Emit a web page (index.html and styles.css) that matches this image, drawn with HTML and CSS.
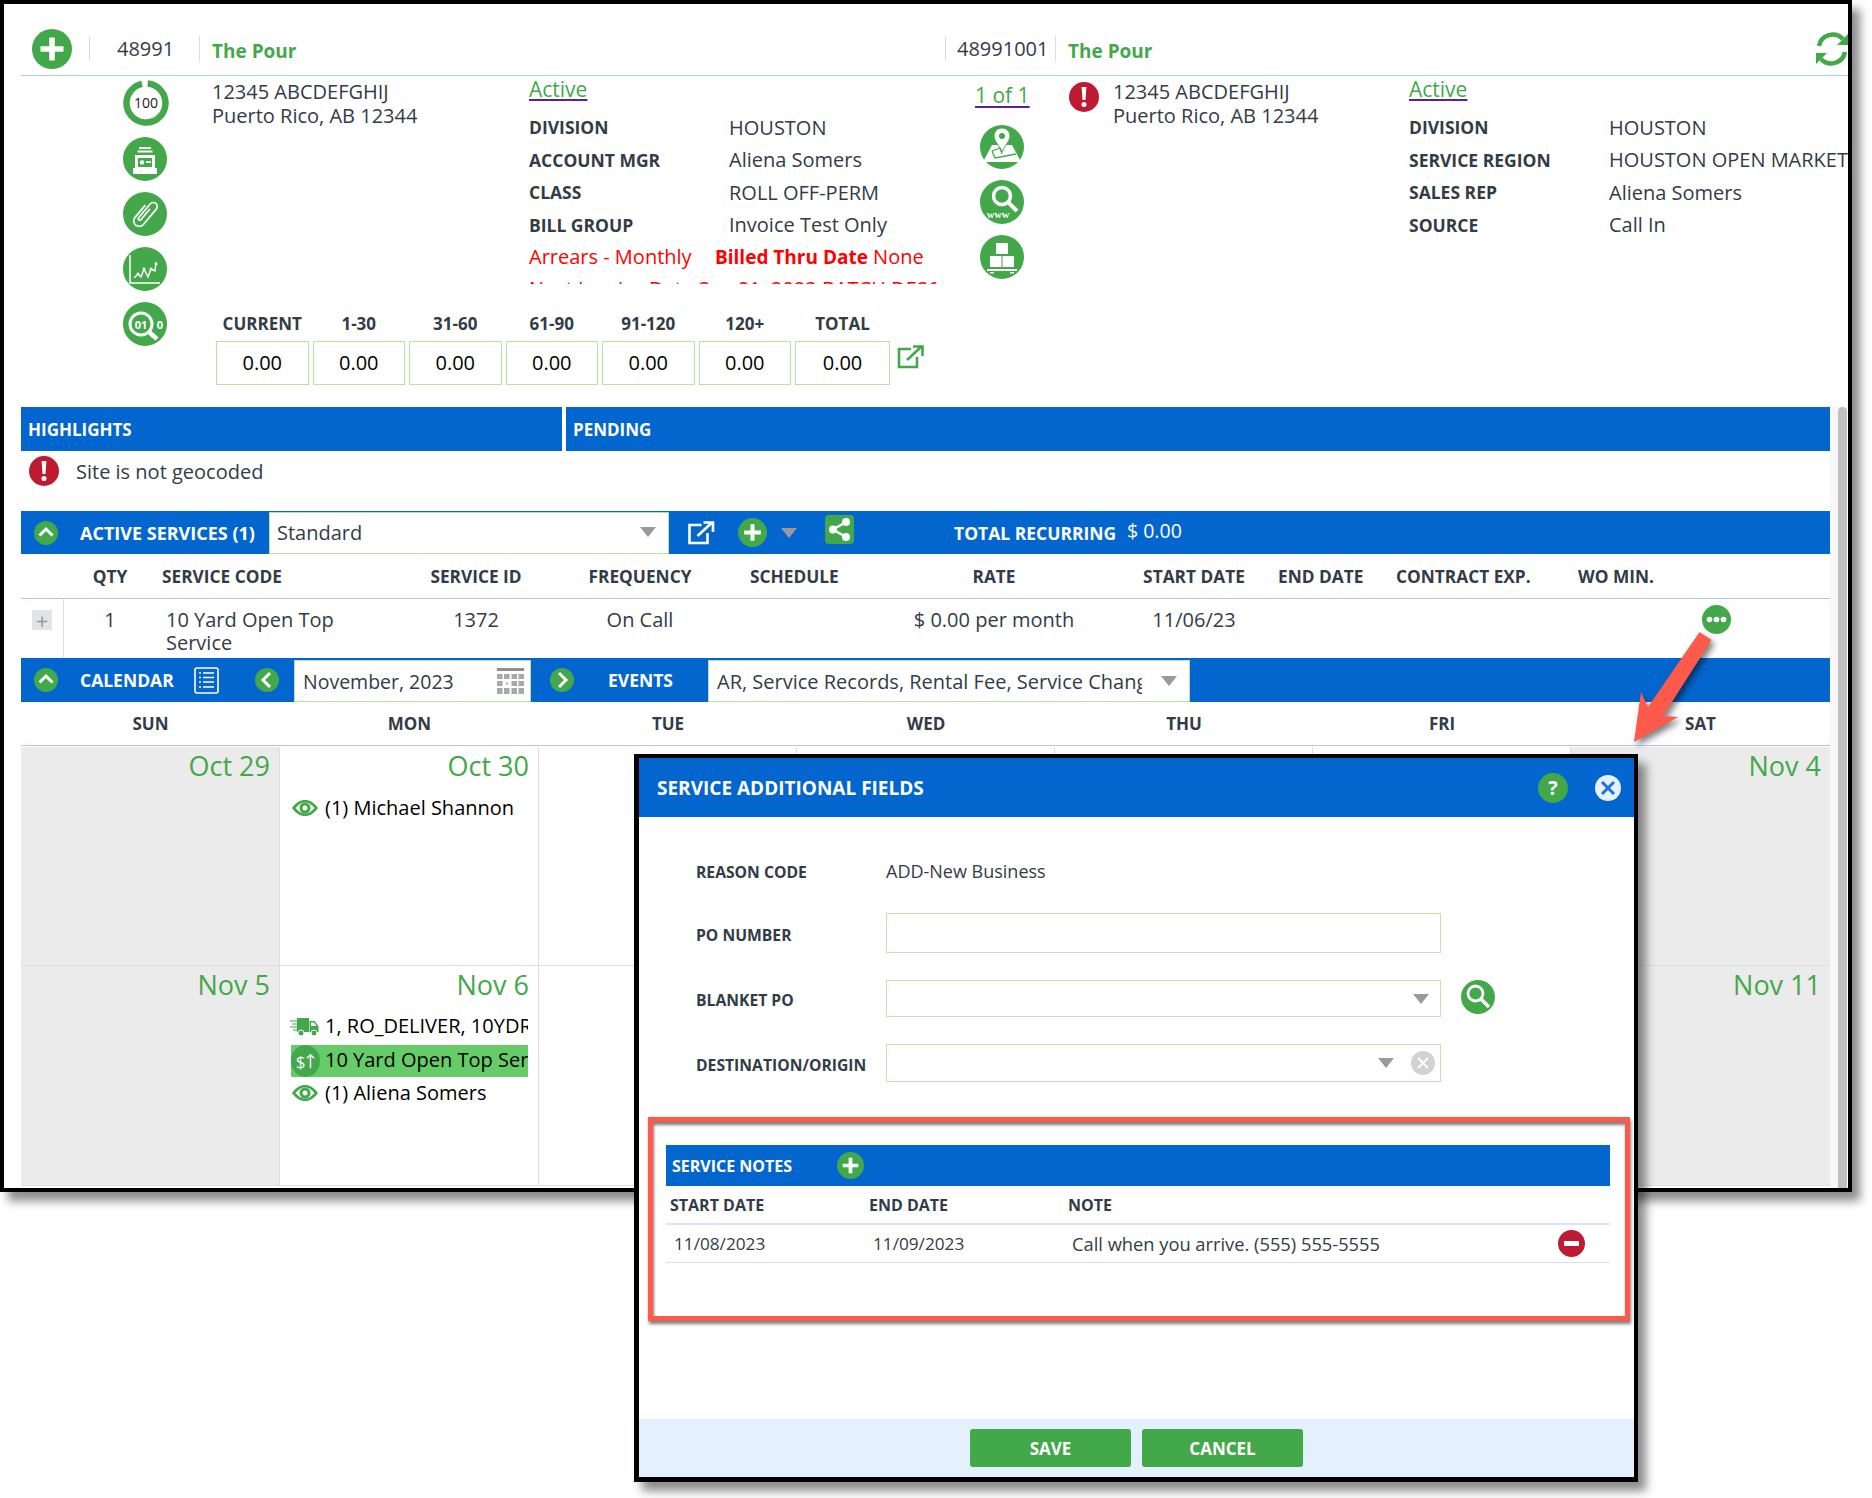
FILE: index.html
```html
<!DOCTYPE html>
<html lang="en">
<head>
<meta charset="utf-8">
<title>Service Additional Fields</title>
<link rel="stylesheet" href="styles.css">
</head>
<body>
<svg class="defs" width="0" height="0" aria-hidden="true">
  <symbol id="plus" viewBox="0 0 40 40"><circle cx="20" cy="20" r="20" fill="#43a84a"/><path d="M20 8.500v23M8.500 20h23" stroke="#fff" stroke-width="5.500"/></symbol>
  <symbol id="up" viewBox="0 0 24 24"><circle cx="12" cy="12" r="12" fill="#43a84a"/><path d="M5.500 14.500 12 8l6.500 6.500" fill="none" stroke="#fff" stroke-width="3"/></symbol>
  <symbol id="left" viewBox="0 0 24 24"><circle cx="12" cy="12" r="12" fill="#43a84a"/><path d="M15 5 8 12l7 7" fill="none" stroke="#fff" stroke-width="3"/></symbol>
  <symbol id="right" viewBox="0 0 24 24"><circle cx="12" cy="12" r="12" fill="#43a84a"/><path d="m9 5 7 7-7 7" fill="none" stroke="#fff" stroke-width="3"/></symbol>
  <symbol id="alert" viewBox="0 0 30 30"><circle cx="15" cy="15" r="15" fill="#be1b31"/><path d="M12.600 5h4.800l-.9 13h-3z" fill="#fff"/><circle cx="15" cy="22.500" r="2.500" fill="#fff"/></symbol>
  <symbol id="ext" viewBox="0 0 28 24"><path d="M14 4H2v18h18V12" fill="none" stroke="currentColor" stroke-width="2.600"/><path d="M10 15 24 2M16 1.500h9.500V11" fill="none" stroke="currentColor" stroke-width="2.600"/></symbol>
  <symbol id="caret" viewBox="0 0 16 10"><path d="M0 0h16l-8 10z" fill="#9a9a9a"/></symbol>
  <symbol id="eye" viewBox="0 0 28 18"><path d="M1 9c4-5.500 8-8 13-8s9 2.500 13 8c-4 5.500-8 8-13 8S5 14.500 1 9z" fill="#43a84a"/><path d="M4.500 9C8 5 10.500 3.500 14 3.500S20 5 23.500 9C20 13 17.500 14.500 14 14.500S8 13 4.500 9z" fill="#fff"/><circle cx="14" cy="9" r="5.500" fill="#43a84a"/><circle cx="14" cy="9" r="2.500" fill="#fff"/></symbol>
  <symbol id="lens" viewBox="0 0 34 34"><circle cx="17" cy="17" r="17" fill="#43a84a"/><circle cx="14.500" cy="13.500" r="7.500" fill="#43a84a" stroke="#fff" stroke-width="2.800"/><path d="m20 19 8 8" stroke="#fff" stroke-width="3.500"/></symbol>
</svg>

<div class="window">
  <header class="topbar">
    <div class="topbar-left">
      <svg class="ic-40"><use href="#plus"/></svg>
      <span class="id-cell id-account">48991</span>
      <span class="name-cell">The Pour</span>
    </div>
    <div class="topbar-right">
      <span class="id-cell id-site">48991001</span>
      <span class="name-cell">The Pour</span>
      <svg class="refresh" viewBox="0 0 36 36"><path d="M5 15A14 14 0 0 1 29 8M31 21A14 14 0 0 1 7 28" fill="none" stroke="#43a84a" stroke-width="4.500"/><path d="M34 3v11H23zM2 33V22h11z" fill="#43a84a"/></svg>
    </div>
  </header>

  <section class="info">
    <nav class="rail">
      <svg class="rail-ring" viewBox="0 0 46 46"><circle cx="23" cy="23" r="19.500" fill="#fff" stroke="#43a84a" stroke-width="6.500" stroke-dasharray="116 6.500" transform="rotate(-85 23 23)"/><text x="23" y="28" class="ring-text">100</text></svg>
      <svg class="rail-ic" viewBox="0 0 44 44"><circle cx="22" cy="22" r="22" fill="#43a84a"/><path d="M16 11h12M14.500 14.500h15" stroke="#fff" stroke-width="2"/><path d="M12 18h20v14H12z" fill="#fff"/><path d="M15 21h14v9H15z" fill="#43a84a"/><circle cx="19" cy="25.500" r="2.300" fill="#fff"/><path d="M23 24h5v2h-5z" fill="#fff"/><path d="M10 31h24v6H10z" fill="#fff"/></svg>
      <svg class="rail-ic" viewBox="0 0 44 44"><circle cx="22" cy="22" r="22" fill="#43a84a"/><path d="M16.500 15v16a5.500 5.500 0 0 0 11 0V11a4 4 0 0 0-8 0v18a1.500 1.500 0 0 0 3 0V15" fill="none" stroke="#fff" stroke-width="1.700" transform="rotate(40 22 22)"/></svg>
      <svg class="rail-ic" viewBox="0 0 44 44"><circle cx="22" cy="22" r="22" fill="#43a84a"/><path d="M7 8v28h30" fill="none" stroke="#fff" stroke-width="1.500"/><path d="m11 31 4-4 3 3 3-8 4 8 3-8 4 2 1-9" fill="none" stroke="#fff" stroke-width="1.400"/><circle cx="21" cy="22" r="1.500" fill="#fff"/><circle cx="28" cy="22" r="1.500" fill="#fff"/><circle cx="33" cy="17" r="1.500" fill="#fff"/><circle cx="15" cy="27" r="1.500" fill="#fff"/></svg>
      <svg class="rail-ic" viewBox="0 0 44 44"><circle cx="22" cy="22" r="22" fill="#43a84a"/><circle cx="18" cy="22" r="11" fill="none" stroke="#fff" stroke-width="3"/><path d="m26 30 8 7" stroke="#fff" stroke-width="4.500"/><text x="18" y="26.500" class="bin-text">01</text><text x="37" y="26.500" class="bin-text">0</text></svg>
    </nav>
    <div class="info-main">
      <div class="info-top">
        <div class="address address-account">12345 ABCDEFGHIJ<br>Puerto Rico, AB 12344</div>
        <div class="details details-account">
          <a class="status" href="#">Active</a>
          <dl class="fields">
            <dt>DIVISION</dt><dd>HOUSTON</dd>
            <dt>ACCOUNT MGR</dt><dd>Aliena Somers</dd>
            <dt>CLASS</dt><dd>ROLL OFF-PERM</dd>
            <dt>BILL GROUP</dt><dd>Invoice Test Only</dd>
          </dl>
          <div class="billing">
            <div class="billing-line"><span class="billing-cycle">Arrears - Monthly</span><span><b class="billed">Billed Thru Date</b> None</span></div>
            <div class="billing-line">Next Invoice Date Sep 01, 2023 BATCH DESC</div>
          </div>
        </div>
        <div class="pager">
          <a class="pager-link" href="#">1 of 1</a>
          <svg class="rail-ic" viewBox="0 0 44 44"><circle cx="22" cy="22" r="22" fill="#43a84a"/><path d="M12 20 3 37h38l-9-17-8 0z" fill="#fff"/><path d="M22 3c-5 0-8 4-8 8 0 5 5 9 8 16 3-7 8-11 8-16 0-4-3-8-8-8z" fill="#fff" stroke="#43a84a"/><circle cx="22" cy="11" r="3" fill="#43a84a"/><path d="m12 26 3 7 21-4M12 26l8-3 2 6" fill="none" stroke="#43a84a" stroke-width="1.300"/></svg>
          <svg class="rail-ic" viewBox="0 0 44 44"><circle cx="22" cy="22" r="22" fill="#43a84a"/><circle cx="22" cy="16" r="8.500" fill="none" stroke="#fff" stroke-width="3.500"/><path d="m28 22 9 9" stroke="#fff" stroke-width="4"/><text x="18" y="38" class="www-text">www</text></svg>
          <svg class="rail-ic" viewBox="0 0 44 44"><circle cx="22" cy="22" r="22" fill="#43a84a"/><path d="M16 8h12v11H16zM10 21h11.500v11H10zM22.500 21H34v11H22.500z" fill="#fff"/><path d="M7 34h30v2H7zM10 37h4v1.500h-4zM30 37h4v1.500h-4z" fill="#fff"/></svg>
        </div>
        <svg class="ic-alert"><use href="#alert"/></svg>
        <div class="address address-site">12345 ABCDEFGHIJ<br>Puerto Rico, AB 12344</div>
        <div class="details">
          <a class="status" href="#">Active</a>
          <dl class="fields">
            <dt>DIVISION</dt><dd>HOUSTON</dd>
            <dt>SERVICE REGION</dt><dd>HOUSTON OPEN MARKET</dd>
            <dt>SALES REP</dt><dd>Aliena Somers</dd>
            <dt>SOURCE</dt><dd>Call In</dd>
          </dl>
        </div>
      </div>
      <div class="aging">
        <div class="aging-col"><span>CURRENT</span><output>0.00</output></div>
        <div class="aging-col"><span>1-30</span><output>0.00</output></div>
        <div class="aging-col"><span>31-60</span><output>0.00</output></div>
        <div class="aging-col"><span>61-90</span><output>0.00</output></div>
        <div class="aging-col"><span>91-120</span><output>0.00</output></div>
        <div class="aging-col"><span>120+</span><output>0.00</output></div>
        <div class="aging-col aging-total"><span>TOTAL</span><output>0.00</output></div>
        <svg class="ic-ext-green"><use href="#ext"/></svg>
      </div>
    </div>
  </section>

  <div class="lower">
    <main class="panels">
      <div class="split-head">
        <div class="split-high">HIGHLIGHTS</div>
        <div class="split-pend">PENDING</div>
      </div>
      <div class="highlight-row">
        <svg class="ic-alert"><use href="#alert"/></svg>
        <span>Site is not geocoded</span>
      </div>

      <div class="bar bar-services">
        <svg class="ic-24 bar-toggle"><use href="#up"/></svg>
        <span class="bar-title bar-title-services">ACTIVE SERVICES (1)</span>
        <div class="select select-services"><span>Standard</span><svg class="caret"><use href="#caret"/></svg></div>
        <svg class="ic-ext-white"><use href="#ext"/></svg>
        <svg class="ic-add"><use href="#plus"/></svg>
        <svg class="caret caret-bar"><use href="#caret"/></svg>
        <svg class="ic-share" viewBox="0 0 29 29"><rect width="29" height="29" rx="4" fill="#43a84a"/><circle cx="21" cy="7" r="4" fill="#fff"/><circle cx="8" cy="14.500" r="4" fill="#fff"/><circle cx="21" cy="22" r="4" fill="#fff"/><path d="M21 7 8 14.500 21 22" fill="none" stroke="#fff" stroke-width="2.500"/></svg>
        <span class="bar-title bar-total">TOTAL RECURRING</span>
        <span class="bar-amount">$ 0.00</span>
      </div>
      <div class="svc-grid svc-head">
        <span></span>
        <span class="center">QTY</span>
        <span class="pad-6">SERVICE CODE</span>
        <span class="center">SERVICE ID</span>
        <span class="center">FREQUENCY</span>
        <span class="pad-2">SCHEDULE</span>
        <span class="center">RATE</span>
        <span class="center pad-4">START DATE</span>
        <span class="pad-2">END DATE</span>
        <span class="pad-4">CONTRACT EXP.</span>
        <span class="pad-4">WO MIN.</span>
      </div>
      <div class="svc-grid svc-row">
        <span class="expander"><i>+</i></span>
        <span class="center">1</span>
        <span class="pad-10">10 Yard Open Top<br>Service</span>
        <span class="center">1372</span>
        <span class="center">On Call</span>
        <span></span>
        <span class="center">$ 0.00 per month</span>
        <span class="center pad-4">11/06/23</span>
        <span></span>
        <span></span>
        <span class="more-cell"><svg class="ic-more" viewBox="0 0 29 29"><circle cx="14.500" cy="14.500" r="14.500" fill="#43a84a"/><circle cx="7.500" cy="14.500" r="2.800" fill="#fff"/><circle cx="14.500" cy="14.500" r="2.800" fill="#fff"/><circle cx="21.500" cy="14.500" r="2.800" fill="#fff"/></svg></span>
      </div>

      <div class="bar bar-calendar">
        <svg class="ic-24 bar-toggle"><use href="#up"/></svg>
        <span class="bar-title bar-title-calendar">CALENDAR</span>
        <svg class="ic-list" viewBox="0 0 25 27"><rect x="1" y="1" width="23" height="25" rx="2" fill="none" stroke="#fff" stroke-width="1.600"/><path d="M5 6h2M9 6h11M5 10.500h2M9 10.500h11M5 15h2M9 15h11M5 20h2M9 20h11" stroke="#fff" stroke-width="1.600"/></svg>
        <svg class="ic-24 cal-prev"><use href="#left"/></svg>
        <div class="select select-month"><span>November, 2023</span>
          <svg class="ic-cal" viewBox="0 0 27 26"><path d="M0 0h27v3H0z" fill="#8f8f8f"/><path d="M0 6h5.500v5H0zM7 6h5.500v5H7zM14.500 6H20v5h-5.500zM21.500 6H27v5h-5.500zM0 13h5.500v5H0zM14.500 13H20v5h-5.500zM21.500 13H27v5h-5.500zM0 20h5.500v6H0zM7 20h5.500v6H7zM14.500 20H20v6h-5.500zM21.500 20H27v6h-5.500zM9 14.500h2v2H9z" fill="#a8a8a8"/></svg>
        </div>
        <svg class="ic-24 cal-next"><use href="#right"/></svg>
        <span class="bar-title bar-title-events">EVENTS</span>
        <div class="select select-events"><span class="clip">AR, Service Records, Rental Fee, Service Change</span><svg class="caret"><use href="#caret"/></svg></div>
      </div>
      <div class="cal-grid cal-days">
        <span>SUN</span><span>MON</span><span>TUE</span><span>WED</span><span>THU</span><span>FRI</span><span>SAT</span>
      </div>
      <div class="cal-grid cal-week">
        <div class="cell off"><div class="date">Oct 29</div></div>
        <div class="cell"><div class="date">Oct 30</div>
          <div class="event"><svg class="ic-eye"><use href="#eye"/></svg>(1) Michael Shannon</div>
        </div>
        <div class="cell"></div><div class="cell"></div><div class="cell"></div><div class="cell"></div>
        <div class="cell off"><div class="date">Nov 4</div></div>
      </div>
      <div class="cal-grid cal-week cal-week-b">
        <div class="cell off"><div class="date">Nov 5</div></div>
        <div class="cell"><div class="date">Nov 6</div>
          <div class="event"><svg class="ic-truck" viewBox="0 0 30 22"><path d="M7 3h12v14H7z" fill="#43a84a"/><path d="M19.500 6h5l4 5v6h-9z" fill="#43a84a"/><path d="M21 7.500h3l2.500 3.500H21z" fill="#fff"/><path d="M0 6h7M2 9h5M0 12h7M3 15h4" stroke="#7cc582" stroke-width="1.500"/><circle cx="11" cy="18" r="3" fill="#43a84a" stroke="#fff"/><circle cx="24" cy="18" r="3" fill="#43a84a" stroke="#fff"/></svg>1, RO_DELIVER, 10YDRO</div>
          <div class="event event-hot"><span class="ic-money">$<svg viewBox="0 0 10 18"><path d="M5 17V2M1 6l4-4 4 4" fill="none" stroke="#fff" stroke-width="1.600"/></svg></span>10 Yard Open Top Service</div>
          <div class="event event-last"><svg class="ic-eye"><use href="#eye"/></svg>(1) Aliena Somers</div>
        </div>
        <div class="cell"></div><div class="cell"></div><div class="cell"></div><div class="cell"></div>
        <div class="cell off"><div class="date">Nov 11</div></div>
      </div>
    </main>
    <div class="scroll-track"></div>
  </div>
</div>

<svg class="callout" viewBox="0 0 100 125"><polygon points="75.500,7 87.600,15 39,91 54,92 10,117 17,67 24,82" fill="#fd5a4c"/></svg>

<aside class="modal">
  <header class="modal-head">
    <span class="modal-title">SERVICE ADDITIONAL FIELDS</span>
    <svg class="ic-help" viewBox="0 0 30 30"><circle cx="15" cy="15" r="15" fill="#43a84a"/><text x="15" y="21.500" class="help-text">?</text></svg>
    <svg class="ic-close" viewBox="0 0 26 26"><circle cx="13" cy="13" r="13" fill="#e6f0fb"/><path d="m7 7 12 12M19 7 7 19" stroke="#1e74d8" stroke-width="3"/></svg>
  </header>
  <div class="form">
    <label class="form-label">REASON CODE</label><div class="form-value">ADD-New Business</div>
    <label class="form-label">PO NUMBER</label><div class="input"></div>
    <label class="form-label">BLANKET PO</label>
    <div class="input-wrap"><div class="input input-caret"><svg class="caret"><use href="#caret"/></svg></div><svg class="ic-lens"><use href="#lens"/></svg></div>
    <label class="form-label">DESTINATION/ORIGIN</label>
    <div class="input input-dest"><svg class="caret"><use href="#caret"/></svg><svg class="ic-clear" viewBox="0 0 24 24"><circle cx="12" cy="12" r="12" fill="#d2d2d2"/><path d="m7 7 10 10M17 7 7 17" stroke="#fff" stroke-width="1.800"/></svg></div>
  </div>
  <section class="notes-box">
    <div class="notes-bar"><span>SERVICE NOTES</span><svg class="ic-add-notes"><use href="#plus"/></svg></div>
    <div class="notes-grid notes-head"><span>START DATE</span><span>END DATE</span><span>NOTE</span></div>
    <div class="notes-grid notes-row"><span class="note-date">11/08/2023</span><span class="note-date">11/09/2023</span><span>Call when you arrive. (555) 555-5555</span>
      <svg class="ic-minus" viewBox="0 0 27 27"><circle cx="13.500" cy="13.500" r="13.500" fill="#be1b31"/><path d="M6 11h15v5H6z" fill="#fff"/></svg>
    </div>
  </section>
  <footer class="modal-foot">
    <button class="btn">SAVE</button>
    <button class="btn">CANCEL</button>
  </footer>
</aside>
</body>
</html>
```
FILE: styles.css
```css
* { box-sizing: border-box; }
html, body { margin: 0; padding: 0; }
body {
  position: relative;
  width: 1872px;
  height: 1498px;
  overflow: hidden;
  background: #fff;
  font-family: "Open Sans", "Noto Sans", sans-serif;
  font-size: 20px;
  color: #323c47;
}
.defs { position: absolute; }
svg { display: block; flex: none; }

.window {
  width: 1852px;
  height: 1192px;
  border: 4px solid #000;
  background: #fff;
  overflow: hidden;
  box-shadow: 8px 9px 9px rgba(0, 0, 0, .45);
}

/* top bar */
.topbar {
  display: flex;
  justify-content: space-between;
  height: 72px;
  margin-left: 17px;
  border-bottom: 1px solid #a3cbf5;
  align-items: center;
  padding-top: 18px;
}
.topbar-left, .topbar-right { display: flex; align-items: center; }
.topbar .ic-40 { margin: 0 17px 0 11px; }
.ic-40 { width: 40px; height: 40px; }
.id-cell {
  display: flex;
  align-items: center;
  height: 25px;
  border-left: 1px solid #ddd;
  border-right: 1px solid #ddd;
}
.id-account { width: 111px; padding-left: 27px; }
.id-site { width: 111px; padding-left: 11px; }
.name-cell { margin-left: 12px; font-weight: 700; font-size: 19px; color: #43a84a; position: relative; top: 2px; }
.topbar-right { width: 903px; }
.refresh { width: 36px; height: 36px; margin: 0 -2px 0 auto; }

/* info */
.info { display: flex; height: 331px; margin-left: 17px; }
.rail { width: 191px; padding: 4px 0 0 102px; display: flex; flex-direction: column; gap: 11px; }
.rail-ic { width: 44px; height: 44px; }
.rail-ring { width: 46px; height: 46px; }
.ring-text { font-size: 14px; fill: #222; text-anchor: middle; font-family: "Open Sans", sans-serif; }
.bin-text { font-size: 11px; font-weight: 700; fill: #fff; text-anchor: middle; font-family: "Open Sans", sans-serif; }
.www-text { font-size: 10.500px; font-weight: 700; fill: #fff; text-anchor: middle; font-family: "Liberation Serif", serif; }
.info-main { flex: 1; min-width: 0; }
.info-top { display: flex; height: 239px; }
.address { line-height: 24px; padding-top: 4px; white-space: nowrap; }
.address-account { width: 317px; }
.address-site { width: 296px; }
.details { padding-top: 1px; }
.details-account { width: 446px; }
.status {
  display: block;
  width: max-content;
  font-size: 21px;
  color: #43a84a;
  line-height: 25px;
  text-decoration: underline;
  text-decoration-color: #5b1f9c;
  text-underline-offset: 2px;
}
.fields {
  display: grid;
  grid-template-columns: 200px auto;
  grid-auto-rows: 32.500px;
  margin: 9px 0 0;
  align-items: center;
  white-space: nowrap;
}
.fields dt { font-weight: 700; font-size: 17.500px; }
.fields dd { margin: 0; }
.billing { color: #f00; height: 43px; overflow: hidden; white-space: nowrap; }
.billing-line { height: 32px; line-height: 32px; width: 407px; overflow: hidden; }
.billing-cycle { display: inline-block; width: 186px; }
.billed { font-size: 19px; }
.pager { width: 94px; display: flex; flex-direction: column; align-items: flex-start; gap: 11px; padding-left: 5px; }
.pager-link {
  margin: 6px 0 0 -5px;
  height: 26px;
  color: #43a84a;
  line-height: 26px;
  text-decoration: underline;
  text-decoration-color: #5b1f9c;
  text-underline-offset: 3px;
  font-size: 21px;
  white-space: nowrap;
}
.pager-link + .rail-ic { margin-top: 6px; }
.ic-alert { width: 30px; height: 30px; }
.info-top > .ic-alert { margin: 6px 14px 0 0; }

.aging { display: flex; gap: 4px; align-items: flex-start; padding-left: 4px; }
.aging-col { width: 92.500px; display: flex; flex-direction: column; }
.aging-total { width: 95px; }
.aging-col span { text-align: center; font-weight: 700; font-size: 17px; line-height: 18px; height: 26px; }
.aging-col output {
  display: flex; align-items: center; justify-content: center;
  height: 44px; padding-bottom: 2px; border: 1px solid #b7e2a3; color: #000; background: #fff; font-size: 20px;
}
.ic-ext-green { width: 28px; height: 24px; margin: 30px 0 0 3px; color: #43a84a; }

/* lower area */
.lower { display: flex; margin-left: 17px; }
.panels { width: 1809px; }
.scroll-track { width: 17px; height: 781px; padding-left: 8px; background: #f7f7f7; }
.scroll-track::before { content: ""; display: block; width: 9px; height: 100%; background: #c0c0c0; border-radius: 5px 5px 0 0; }

.split-head { display: flex; gap: 4px; height: 44px; color: #fff; font-weight: 700; font-size: 17px; }
.split-high { width: 541px; background: #0366cf; padding: 12px 0 0 7px; line-height: 22px; }
.split-pend { flex: 1; background: #0366cf; padding: 12px 0 0 7px; line-height: 22px; }
.highlight-row { display: flex; align-items: center; gap: 17px; height: 60px; padding: 0 0 20px 8px; }

.bar { display: flex; align-items: center; background: #0366cf; color: #fff; }
.bar-services { height: 43px; }
.bar-calendar { height: 44px; }
.bar-title { font-weight: 700; font-size: 17.500px; white-space: nowrap; }
.ic-24 { width: 24px; height: 24px; }
.bar-toggle { margin-left: 13px; }
.bar-title-services { margin-left: 22px; width: 189px; font-size: 18px; }
.bar-title-calendar { margin-left: 22px; width: 114px; }
.select {
  display: flex; align-items: center; justify-content: space-between;
  background: #fff; color: #323c47;
  border: 1px solid #b7e2a3;
}
.select-services { width: 400px; height: 42px; margin-top: 1px; padding: 0 12px 2px 7px; }
.caret { width: 16px; height: 10px; }
.ic-ext-white { width: 29px; height: 24px; margin-left: 18px; color: #fff; }
.ic-add { width: 29px; height: 29px; margin-left: 22px; }
.caret-bar { margin-left: 14px; }
.ic-share { width: 29px; height: 29px; margin: -6px 0 0 28px; }
.bar-total { margin-left: 100px; width: 173px; }
.bar-amount { font-size: 19.500px; position: relative; top: -2px; white-space: nowrap; }

.svc-grid {
  display: grid;
  grid-template-columns: 43px 92px 264px 112px 216px 132px 228px 168px 116px 182px 256px;
}
.svc-head { height: 45px; align-items: center; font-weight: 700; font-size: 17.300px; border-bottom: 1px solid #a3cbf5; white-space: nowrap; }
.svc-row { height: 59px; line-height: 23px; padding-top: 9px; white-space: nowrap; }
.center { text-align: center; }
.pad-2 { padding-left: 2px; }
.pad-4 { padding-left: 4px; }
.pad-6 { padding-left: 6px; }
.pad-10 { padding-left: 10px; }
.expander { margin-top: -9px; height: 59px; border-right: 1px solid #ddd; padding: 11px 0 0 11px; }
.expander i {
  display: flex; align-items: center; justify-content: center;
  width: 20px; height: 20px; background: #e2e4e6; color: #999;
  font-style: normal; font-size: 22px; line-height: 1;
}
.more-cell { padding: 0 0 0 128px; margin-top: -3px; }
.ic-more { width: 29px; height: 29px; }

.ic-list { width: 25px; height: 27px; }
.cal-prev { margin-left: 36px; }
.select-month { width: 237px; height: 42px; margin: 2px 0 0 15px; padding: 0 6px 0 8px; font-size: 19.500px; }
.ic-cal { width: 27px; height: 26px; }
.cal-next { margin-left: 19px; }
.bar-title-events { margin-left: 34px; width: 100px; }
.select-events { width: 482px; height: 42px; margin-top: 2px; padding: 0 12px 0 8px; }
.clip { display: block; width: 425px; overflow: hidden; white-space: nowrap; }

.cal-grid { display: grid; grid-template-columns: 259px 259px 258px 258px 258px 258px 259px; }
.cal-days { height: 44px; align-items: center; text-align: center; font-weight: 700; font-size: 17px; padding-bottom: 1px; border-bottom: 1px solid #a3cbf5; }
.cal-week { height: 219px; margin-top: 1px; border-bottom: 1px solid #ddd; }
.cal-week-b { margin-top: 0; height: 220px; }
.cell { border-right: 1px solid #ddd; padding: 0 10px; overflow: hidden; color: #000; }
.cell.off { background: #ebebeb; }
.cell:last-child { border-right: 0; }
.date { height: 38px; line-height: 37px; margin-right: -1px; text-align: right; font-size: 27px; color: #43a84a; white-space: nowrap; }
.event { display: flex; align-items: center; height: 33px; white-space: nowrap; overflow: hidden; }
.date + .event { margin-top: 6px; }
.cal-week-b .date + .event { margin-top: 5px; }
.ic-eye { width: 28px; height: 18px; margin: 0 6px 0 1px; }
.ic-truck { width: 30px; height: 22px; margin-right: 5px; }
.event-hot { background: #66cc6a; height: 32px; margin: 3px 0 0 1px; padding-bottom: 4px; }
.event-last { height: 31px; }
.ic-money {
  display: flex; align-items: center; justify-content: center; flex: none;
  width: 29px; height: 32px; margin: 0 5px 0 0; position: relative; top: 2px;
  border-radius: 50%; background: #43a84a; color: #fff; font-size: 17px;
}
.ic-money svg { width: 9px; height: 18px; margin-left: 1px; }

.callout {
  position: absolute;
  left: 1624px; top: 625px;
  width: 100px; height: 125px;
  filter: drop-shadow(3px 4px 3px rgba(0, 0, 0, .5));
}

/* modal */
.modal {
  position: absolute;
  left: 634px; top: 754px;
  width: 1004px; height: 728px;
  display: flex; flex-direction: column;
  background: #fff;
  border: 4px solid #000;
  border-left-width: 5px;
  border-bottom-width: 5px;
  box-shadow: 8px 9px 9px rgba(0, 0, 0, .45);
}
.modal-head {
  display: flex; align-items: center; flex: none;
  height: 59px; background: #0366cf; color: #fff;
  padding: 0 13px 0 18px;
}
.modal-title { font-weight: 700; font-size: 19px; flex: 1; }
.ic-help { width: 30px; height: 30px; margin-right: 27px; }
.ic-close { width: 26px; height: 26px; }
.help-text { font-size: 20px; font-weight: 700; fill: #fff; text-anchor: middle; font-family: "Open Sans", sans-serif; }

.form {
  display: grid;
  grid-template-columns: 190px 1fr;
  grid-template-rows: 32px 40px 37px 38px;
  row-gap: 27px;
  padding: 37px 0 0 57px;
  align-items: center;
  flex: none;
}
.form-label { font-weight: 700; font-size: 15.700px; white-space: nowrap; padding-top: 3px; }
.form-value { font-size: 18px; padding-top: 1px; }
.form > .input { width: 555px; height: 100%; }
.input { border: 1px solid #bfe5aa; display: flex; align-items: center; justify-content: flex-end; }
.input-wrap { display: flex; align-items: center; height: 100%; gap: 20px; }
.input-caret { width: 555px; height: 100%; padding-right: 11px; }
.input-dest { padding-right: 5px; gap: 17px; }
.ic-lens { width: 34px; height: 34px; margin-top: -3px; }
.ic-clear { width: 24px; height: 24px; }

.notes-box {
  flex: none;
  width: 982px;
  height: 204px;
  margin: 35px 0 0 9px;
  border: 5px solid #fd5a4c;
  padding: 23px 15px 0 13px;
  box-shadow: 1px 3px 3px rgba(0, 0, 0, .5), inset 1px 3px 3px rgba(0, 0, 0, .5);
}
.notes-bar {
  display: flex; align-items: center; height: 41px; background: #0366cf;
  color: #fff; font-weight: 700; font-size: 16px; padding-left: 6px;
}
.notes-bar span { width: 165px; }
.ic-add-notes { width: 27px; height: 27px; }
.notes-grid { display: grid; grid-template-columns: 199px 199px 1fr auto; align-items: center; }
.notes-head { height: 39px; padding-left: 4px; font-weight: 700; font-size: 16px; border-bottom: 2px solid #d5e8fb; grid-template-columns: 199px 199px 1fr; }
.notes-row { height: 38px; padding: 0 25px 0 8px; font-size: 18.300px; border-bottom: 1px solid #ddd; }
.note-date { font-size: 17.200px; }
.ic-minus { width: 27px; height: 27px; }

.modal-foot {
  margin-top: auto;
  height: 58px; flex: none;
  background: #e4f0fb;
  display: flex; justify-content: center; gap: 11px;
  padding: 10px 0 0 0;
}
.btn {
  width: 161px; height: 38px;
  background: #43a84a; color: #fff;
  border: 0; border-radius: 3px;
  font: 700 17px "Open Sans", sans-serif;
}
```
